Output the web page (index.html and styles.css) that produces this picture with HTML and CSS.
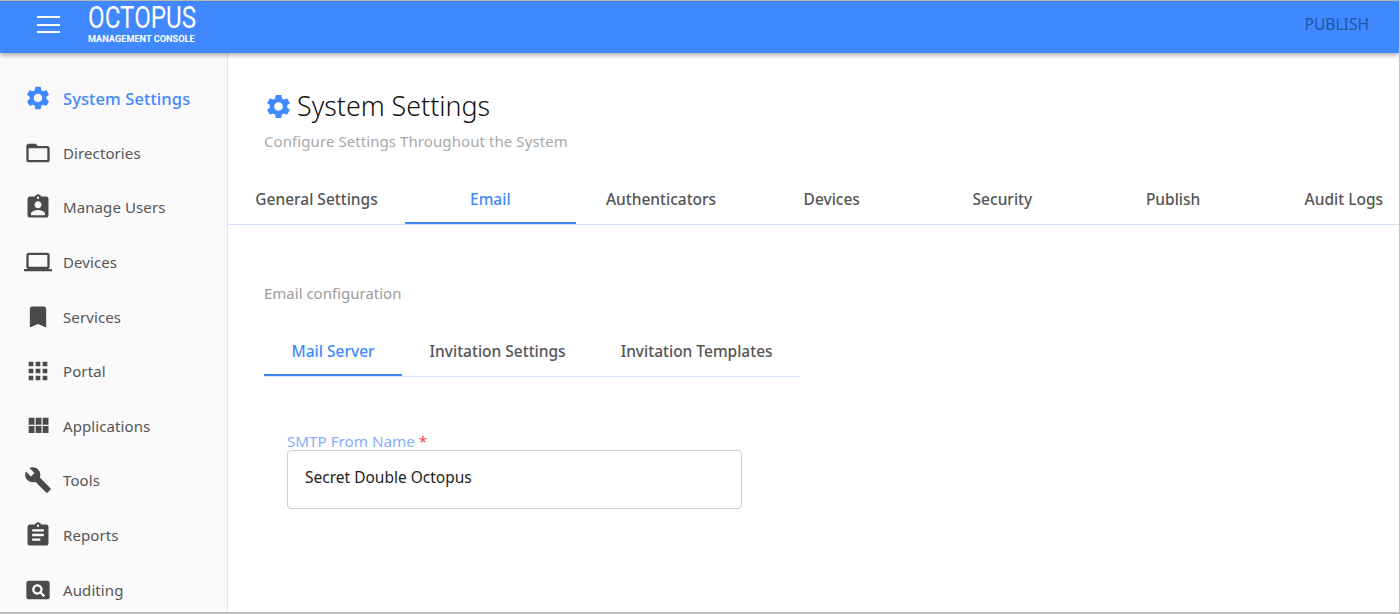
FILE: index.html
```html
<!DOCTYPE html>
<html lang="en">
<head>
  <meta charset="UTF-8">
  <meta name="viewport" content="width=device-width, initial-scale=1.0">
  <title>System Settings</title>
  <link rel="stylesheet" href="styles.css">
</head>
<body>
  <div class="frame">
    <header class="topbar">
      <div class="burger"><span></span><span></span><span></span></div>
      <div class="logo">
        <div class="logo-name">OCTOPUS</div>
        <div class="logo-sub">MANAGEMENT CONSOLE</div>
      </div>
      <div class="publish">PUBLISH</div>
    </header>

    <div class="content">
      <nav class="sidebar">
        <a class="nav-item active">
          <svg class="nav-icon gear" viewBox="0 0 24 24"><path d="M19.14 12.94c.04-.3.06-.61.06-.94 0-.32-.02-.64-.07-.94l2.03-1.58c.18-.14.23-.41.12-.61l-1.92-3.32c-.12-.22-.37-.29-.59-.22l-2.39.96c-.5-.38-1.03-.7-1.62-.94l-.36-2.54c-.04-.24-.24-.41-.48-.41h-3.84c-.24 0-.43.17-.47.41l-.36 2.54c-.59.24-1.13.57-1.62.94l-2.39-.96c-.22-.08-.47 0-.59.22L2.74 8.87c-.12.21-.08.47.12.61l2.03 1.58c-.05.3-.09.63-.09.94s.02.64.07.94l-2.03 1.58c-.18.14-.23.41-.12.61l1.92 3.32c.12.22.37.29.59.22l2.39-.96c.5.38 1.03.7 1.62.94l.36 2.54c.05.24.24.41.48.41h3.84c.24 0 .44-.17.47-.41l.36-2.54c.59-.24 1.13-.56 1.62-.94l2.39.96c.22.08.47 0 .59-.22l1.92-3.32c.12-.22.07-.47-.12-.61l-2.01-1.58zM12 15.6c-1.98 0-3.6-1.62-3.6-3.6s1.62-3.6 3.6-3.6 3.6 1.62 3.6 3.6-1.62 3.6-3.6 3.6z"/></svg>
          System Settings
        </a>
        <a class="nav-item">
          <svg class="nav-icon" viewBox="0 0 24 24"><path d="M20 6h-8l-2-2H4c-1.1 0-1.99.9-1.99 2L2 18c0 1.1.9 2 2 2h16c1.1 0 2-.9 2-2V8c0-1.1-.9-2-2-2zm0 12H4V8h16v10z"/></svg>
          Directories
        </a>
        <a class="nav-item">
          <svg class="nav-icon" viewBox="0 0 24 24"><path d="M19 3h-4.18C14.4 1.84 13.3 1 12 1c-1.3 0-2.4.84-2.82 2H5c-1.1 0-2 .9-2 2v14c0 1.1.9 2 2 2h14c1.1 0 2-.9 2-2V5c0-1.1-.9-2-2-2zm-7 0c.55 0 1 .45 1 1s-.45 1-1 1-1-.45-1-1 .45-1 1-1zm0 4c1.66 0 3 1.34 3 3s-1.34 3-3 3-3-1.34-3-3 1.34-3 3-3zm6 12H6v-1.4c0-2 4-3.1 6-3.1s6 1.1 6 3.1V19z"/></svg>
          Manage Users
        </a>
        <a class="nav-item">
          <svg class="nav-icon" viewBox="0 0 24 24"><path d="M20 18c1.1 0 1.99-.9 1.99-2L22 6c0-1.1-.9-2-2-2H4c-1.1 0-2 .9-2 2v10c0 1.1.9 2 2 2H0v2h24v-2h-4zM4 6h16v10H4V6z"/></svg>
          Devices
        </a>
        <a class="nav-item">
          <svg class="nav-icon" viewBox="0 0 24 24"><path d="M17 3H7c-1.1 0-1.99.9-1.99 2L5 21l7-3 7 3V5c0-1.1-.9-2-2-2z"/></svg>
          Services
        </a>
        <a class="nav-item">
          <svg class="nav-icon" viewBox="0 0 24 24"><path d="M4 8h4V4H4v4zm6 12h4v-4h-4v4zm-6 0h4v-4H4v4zm0-6h4v-4H4v4zm6 0h4v-4h-4v4zm6-10v4h4V4h-4zm-6 4h4V4h-4v4zm6 6h4v-4h-4v4zm0 6h4v-4h-4v4z"/></svg>
          Portal
        </a>
        <a class="nav-item">
          <svg class="nav-icon" viewBox="0 0 24 24"><path d="M4 11h5V5H4v6zm0 7h5v-6H4v6zm6 0h5v-6h-5v6zm6 0h5v-6h-5v6zm-6-7h5V5h-5v6zm6-6v6h5V5h-5z"/></svg>
          Applications
        </a>
        <a class="nav-item">
          <svg class="nav-icon" viewBox="0 0 24 24"><path d="M22.7 19l-9.1-9.1c.9-2.3.4-5-1.5-6.9-2-2-5-2.4-7.4-1.3L9 6 6 9 1.6 4.7C.4 7.1.9 10.1 2.9 12.1c1.9 1.9 4.6 2.4 6.9 1.5l9.1 9.1c.4.4 1 .4 1.4 0l2.3-2.3c.5-.4.5-1.1.1-1.4z"/></svg>
          Tools
        </a>
        <a class="nav-item">
          <svg class="nav-icon" viewBox="0 0 24 24"><path d="M19 3h-4.18C14.4 1.84 13.3 1 12 1c-1.3 0-2.4.84-2.82 2H5c-1.1 0-2 .9-2 2v14c0 1.1.9 2 2 2h14c1.1 0 2-.9 2-2V5c0-1.1-.9-2-2-2zm-7 0c.55 0 1 .45 1 1s-.45 1-1 1-1-.45-1-1 .45-1 1-1zm2 14H7v-2h7v2zm3-4H7v-2h10v2zm0-4H7V7h10v2z"/></svg>
          Reports
        </a>
        <a class="nav-item">
          <svg class="nav-icon" viewBox="0 0 24 24"><path d="M11.5 9C10.12 9 9 10.12 9 11.5s1.12 2.5 2.5 2.5 2.5-1.12 2.5-2.5S12.88 9 11.5 9zM20 4H4c-1.1 0-2 .9-2 2v12c0 1.1.9 2 2 2h16c1.1 0 2-.9 2-2V6c0-1.1-.9-2-2-2zm-3.21 14.21l-2.91-2.91c-.69.44-1.51.7-2.38.7C9 16 7 14 7 11.5S9 7 11.5 7 16 9 16 11.5c0 .88-.26 1.69-.7 2.39l2.91 2.9-1.42 1.42z"/></svg>
          Auditing
        </a>
      </nav>

      <main class="main">
        <div class="page-head">
          <h1 class="page-title">
            <svg class="title-icon" viewBox="0 0 24 24"><path d="M19.14 12.94c.04-.3.06-.61.06-.94 0-.32-.02-.64-.07-.94l2.03-1.58c.18-.14.23-.41.12-.61l-1.92-3.32c-.12-.22-.37-.29-.59-.22l-2.39.96c-.5-.38-1.03-.7-1.62-.94l-.36-2.54c-.04-.24-.24-.41-.48-.41h-3.84c-.24 0-.43.17-.47.41l-.36 2.54c-.59.24-1.13.57-1.62.94l-2.39-.96c-.22-.08-.47 0-.59.22L2.74 8.87c-.12.21-.08.47.12.61l2.03 1.58c-.05.3-.09.63-.09.94s.02.64.07.94l-2.03 1.58c-.18.14-.23.41-.12.61l1.92 3.32c.12.22.37.29.59.22l2.39-.96c.5.38 1.03.7 1.62.94l.36 2.54c.05.24.24.41.48.41h3.84c.24 0 .44-.17.47-.41l.36-2.54c.59-.24 1.13-.56 1.62-.94l2.39.96c.22.08.47 0 .59-.22l1.92-3.32c.12-.22.07-.47-.12-.61l-2.01-1.58zM12 15.6c-1.98 0-3.6-1.62-3.6-3.6s1.62-3.6 3.6-3.6 3.6 1.62 3.6 3.6-1.62 3.6-3.6 3.6z"/></svg>
            System Settings
          </h1>
          <p class="page-sub">Configure Settings Throughout the System</p>
        </div>

        <div class="tabs">
          <div class="tab first">General Settings</div>
          <div class="tab active">Email</div>
          <div class="tab">Authenticators</div>
          <div class="tab">Devices</div>
          <div class="tab">Security</div>
          <div class="tab">Publish</div>
          <div class="tab">Audit Logs</div>
        </div>

        <div class="panel">
          <p class="panel-title">Email configuration</p>
          <div class="subtabs">
            <div class="subtab active">Mail Server</div>
            <div class="subtab">Invitation Settings</div>
            <div class="subtab">Invitation Templates</div>
          </div>
          <div class="field">
            <label class="field-label">SMTP From Name <span class="required">*</span></label>
            <div class="field-input">Secret Double Octopus</div>
          </div>
        </div>
      </main>
    </div>
  </div>
</body>
</html>
```

FILE: styles.css
```css
* {
  margin: 0;
  padding: 0;
  box-sizing: border-box;
}

html, body {
  height: 100%;
  overflow: hidden;
}

body {
  font-family: "Noto Sans", Arial, sans-serif;
  background-color: white;
  color: #4a4a4a;
}

.frame {
  height: 614px;
  display: flex;
  flex-direction: column;
  border-top: 1px solid #b8b8b8;
  border-right: 1px solid #c4c4c4;
  border-bottom: 2px solid #bdbdbd;
  overflow: hidden;
}

/* top bar */
.topbar {
  height: 52px;
  flex-shrink: 0;
  display: flex;
  align-items: center;
  background-color: #3f88ff;
  box-shadow: 0 2px 5px rgba(0, 0, 0, 0.35);
  position: relative;
  z-index: 2;
}

.burger {
  width: 23px;
  margin: -5px 0 0 37px;
  display: flex;
  flex-direction: column;
  gap: 5.5px;
}

.burger span {
  height: 2px;
  background-color: white;
}

.logo {
  margin-left: 28px;
  color: white;
  width: 109px;
  margin-top: -7px;
}

.logo-name {
  font-family: Roboto, sans-serif;
  font-weight: 400;
  font-size: 31px;
  line-height: 29px;
  transform: scaleX(0.78);
  transform-origin: left center;
  white-space: nowrap;
}

.logo-sub {
  font-family: Roboto, sans-serif;
  font-weight: 700;
  font-size: 9.2px;
  line-height: 10px;
  margin-top: 2px;
  white-space: nowrap;
}

.publish {
  margin: -7px 30px 0 auto;
  font-size: 15.6px;
  color: #23579f;
}

/* sidebar */
.content {
  flex: 1;
  display: flex;
  min-height: 0;
}

.sidebar {
  width: 228px;
  flex-shrink: 0;
  background-color: #fafafa;
  border-right: 1px solid #e6e6e6;
  padding-top: 18px;
  overflow: hidden;
}

.nav-item {
  height: 54.6px;
  display: flex;
  align-items: center;
  gap: 11px;
  padding-left: 24px;
  font-size: 15px;
  letter-spacing: 0.1px;
  color: #555;
}

.nav-icon {
  width: 28px;
  height: 28px;
  fill: #4a4a4a;
  flex-shrink: 0;
}

.nav-item.active {
  color: #3f88ff;
  font-size: 16.5px;
  font-weight: 500;
}

.nav-item.active .nav-icon {
  fill: #3f88ff;
}

/* main area */
.main {
  flex: 1;
  min-width: 0;
  overflow: hidden;
}

.page-head {
  padding: 35px 0 0 36px;
}

.page-title {
  display: flex;
  align-items: center;
  gap: 4px;
  font-size: 26.8px;
  font-weight: 300;
  line-height: 36px;
  color: #111;
}

.title-icon {
  width: 29px;
  height: 29px;
  fill: #3f88ff;
}

.page-sub {
  margin-top: 7px;
  font-size: 15px;
  letter-spacing: 0.08px;
  color: #a8a8a8;
}

.tabs {
  display: flex;
  margin-top: 23px;
  height: 51px;
  border-bottom: 1px solid #cfe0f8;
}

.tab {
  width: 170.7px;
  flex-shrink: 0;
  display: flex;
  align-items: center;
  justify-content: center;
  font-size: 15.5px;
  font-weight: 500;
  color: #555;
  white-space: nowrap;
}

.tab.first {
  width: 177px;
}

.tab.active,
.subtab.active {
  color: #3f88ff;
  padding-top: 2px;
  border-bottom: 2px solid #3f88ff;
}

.panel {
  padding: 58px 0 0 36px;
}

.panel-title {
  font-size: 15px;
  color: #9b9b9b;
}

.subtabs {
  display: flex;
  width: 536px;
  height: 51px;
  margin-top: 23px;
  border-bottom: 1px solid #dce8fb;
}

.subtab {
  padding: 0 27.5px;
  display: flex;
  align-items: center;
  font-size: 15.5px;
  font-weight: 500;
  color: #555;
  white-space: nowrap;
}

.field {
  width: 455px;
  margin: 55px 0 0 23px;
}

.field-label {
  display: block;
  font-size: 15.2px;
  line-height: 18px;
  color: #86aefc;
}

.required {
  color: #f44336;
}

.field-input {
  height: 59px;
  padding: 0 0 5px 17px;
  display: flex;
  align-items: center;
  border: 1px solid #cfcfcf;
  border-radius: 4px;
  font-size: 15.5px;
  color: #222;
}
```
